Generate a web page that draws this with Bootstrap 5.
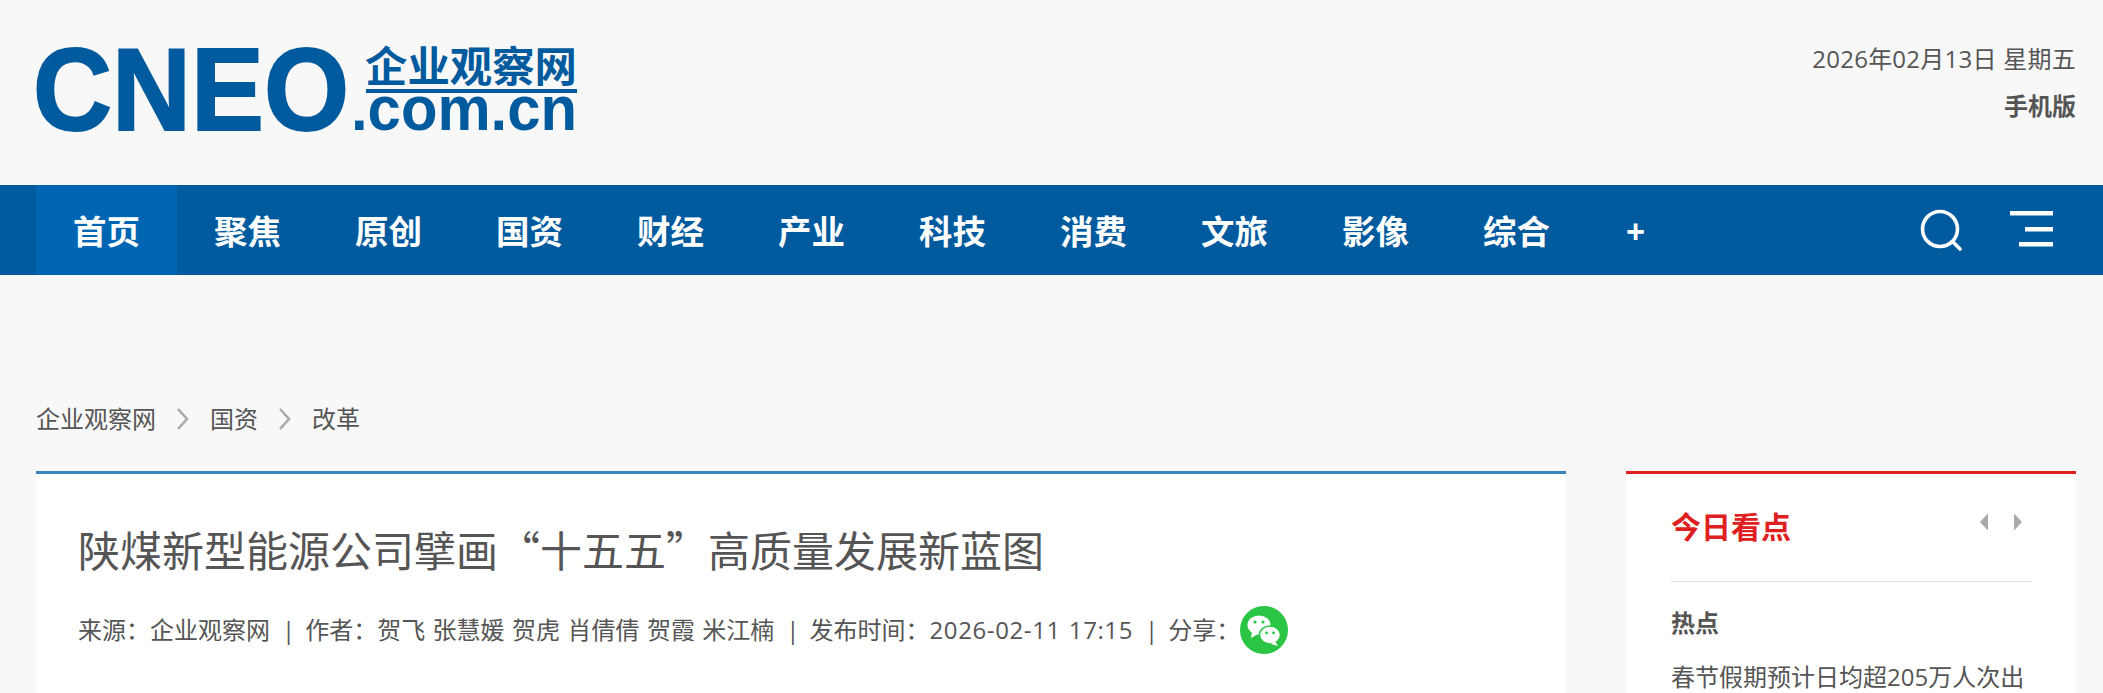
<!DOCTYPE html>
<html lang="zh-CN">
<head>
    <meta charset="UTF-8">
    <meta name="viewport" content="width=device-width, initial-scale=1.0">
    <title>陕煤新型能源公司擘画“十五五”高质量发展新蓝图</title>
    <link href="https://cdn.jsdelivr.net/npm/bootstrap@5.3.0/dist/css/bootstrap.min.css" rel="stylesheet">
    <style>
        html, body {
            height: 693px;
            overflow: hidden;
        }
        body {
            background: #f8f8f8;
            color: #555;
            font-family: "Open Sans", "Noto Sans CJK SC", sans-serif;
            font-size: 24px;
        }
        .page-wrap {
            padding-left: 36px;
            padding-right: 27px;
        }
        .site-top {
            height: 185px;
            padding-top: 47px;
        }
        .site-logo {
            display: block;
            width: 541px;
            height: 84px;
            fill: #005a9e;
            overflow: visible;
        }
        .logo-big {
            font-family: "Liberation Sans", sans-serif;
            font-weight: 700;
            font-size: 116px;
            stroke: #005a9e;
            stroke-width: 2px;
        }
        .logo-cn {
            font-family: "Noto Sans CJK SC", sans-serif;
            font-weight: 700;
            font-size: 42px;
        }
        .logo-dom {
            font-family: "Liberation Sans", sans-serif;
            font-weight: 700;
            font-size: 63px;
        }
        .top-info {
            line-height: 47px;
            margin-top: -12px;
        }
        .date-text {
            letter-spacing: .25px;
        }
        .num-text {
            letter-spacing: .6px;
        }
        .main-bar {
            background: #005a9e;
            height: 90px;
        }
        .main-bar .nav-link {
            width: 141px;
            height: 90px;
            padding: 0;
            color: #fff;
            font-size: 33.5px;
            font-weight: 700;
            line-height: 92px;
            text-align: center;
        }
        .main-bar .nav-link.active {
            background: #0066b3;
        }
        .main-bar .more-link {
            width: 97px;
        }
        .bar-search {
            margin-right: 47px;
        }
        .bar-menu {
            margin-right: 23px;
        }
        .crumbs {
            height: 196px;
            padding-top: 126px;
            line-height: 36px;
        }
        .crumbs a {
            color: #555;
            text-decoration: none;
        }
        .crumb-sep {
            width: 54px;
        }
        .article-box {
            background: #fff;
            border-top: 3px solid #3a83c0;
            height: 222px;
            overflow: hidden;
            padding: 30px 42px 0;
        }
        .article-title {
            font-family: "Noto Sans CJK SC", sans-serif;
            font-size: 42px;
            font-weight: 400;
            line-height: 90px;
            margin: 0;
            color: #555;
        }
        .article-meta {
            line-height: 48px;
            margin-top: 12px;
            word-spacing: 1.2px;
        }
        .meta-sep {
            margin: 0 10px 0 12px;
        }
        .side-box {
            background: #fff;
            border-top: 3px solid #e02020;
            width: 450px;
            margin-left: 60px;
            height: 222px;
            overflow: hidden;
            padding: 0 45px;
        }
        .side-head {
            height: 108px;
            border-bottom: 1px solid #ddd;
            padding-top: 35px;
        }
        .side-head h2 {
            color: #e02020;
            font-size: 30px;
            font-weight: 700;
            margin: 0;
        }
        .side-arrows {
            margin-top: 1px;
            margin-right: 6px;
        }
        .side-label {
            font-weight: 700;
            margin-top: 23px;
            line-height: 36px;
        }
        .side-item {
            margin-top: 18px;
            line-height: 36px;
            white-space: nowrap;
        }
    </style>
</head>
<body>
    <header class="page-wrap site-top d-flex justify-content-between">
        <svg class="site-logo" viewBox="0 0 541 84" role="img" aria-label="CNEO 企业观察网 .com.cn">
            <text class="logo-big" x="-3" y="83" textLength="316" lengthAdjust="spacingAndGlyphs">CNEO</text>
            <text class="logo-cn" x="329" y="35" textLength="212" lengthAdjust="spacingAndGlyphs">企业观察网</text>
            <rect x="330" y="42" width="211" height="4"></rect>
            <text class="logo-dom" x="315" y="83" textLength="226" lengthAdjust="spacingAndGlyphs">.com.cn</text>
        </svg>
        <div class="top-info text-end">
            <div class="date-text">2026年02月13日 星期五</div>
            <div class="fw-bold">手机版</div>
        </div>
    </header>

    <nav class="main-bar">
        <div class="page-wrap d-flex justify-content-between align-items-center">
            <ul class="nav flex-nowrap">
                <li class="nav-item"><a class="nav-link active" href="#">首页</a></li>
                <li class="nav-item"><a class="nav-link" href="#">聚焦</a></li>
                <li class="nav-item"><a class="nav-link" href="#">原创</a></li>
                <li class="nav-item"><a class="nav-link" href="#">国资</a></li>
                <li class="nav-item"><a class="nav-link" href="#">财经</a></li>
                <li class="nav-item"><a class="nav-link" href="#">产业</a></li>
                <li class="nav-item"><a class="nav-link" href="#">科技</a></li>
                <li class="nav-item"><a class="nav-link" href="#">消费</a></li>
                <li class="nav-item"><a class="nav-link" href="#">文旅</a></li>
                <li class="nav-item"><a class="nav-link" href="#">影像</a></li>
                <li class="nav-item"><a class="nav-link" href="#">综合</a></li>
                <li class="nav-item"><a class="nav-link more-link" href="#">+</a></li>
            </ul>
            <div class="d-flex align-items-center">
                <svg class="bar-search" width="43" height="43" viewBox="0 0 43 43" fill="none" stroke="#fff" stroke-width="3.6" stroke-linecap="round">
                    <circle cx="20" cy="20" r="17.5"></circle>
                    <path d="M33 33l7 7"></path>
                </svg>
                <svg class="bar-menu" width="43" height="40" viewBox="0 0 43 40" fill="#fff">
                    <rect x="0" y="1" width="43" height="4.5"></rect>
                    <rect x="15" y="17" width="28" height="4.5"></rect>
                    <rect x="9" y="32" width="34" height="4.5"></rect>
                </svg>
            </div>
        </div>
    </nav>

    <div class="page-wrap">
        <div class="crumbs d-flex align-items-start">
            <a href="#">企业观察网</a>
            <span class="crumb-sep d-flex justify-content-center align-items-center">
                <svg width="16" height="36" viewBox="0 0 16 36" fill="none" stroke="#aaa" stroke-width="2.6"><path d="M3 8l9 10-9 10"></path></svg>
            </span>
            <a href="#">国资</a>
            <span class="crumb-sep d-flex justify-content-center align-items-center">
                <svg width="16" height="36" viewBox="0 0 16 36" fill="none" stroke="#aaa" stroke-width="2.6"><path d="M3 8l9 10-9 10"></path></svg>
            </span>
            <a href="#">改革</a>
        </div>

        <div class="d-flex">
            <main class="article-box flex-grow-1">
                <h1 class="article-title">陕煤新型能源公司擘画“十五五”高质量发展新蓝图</h1>
                <div class="article-meta d-flex align-items-center text-nowrap">
                    <span>来源：企业观察网</span><span class="meta-sep">|</span>
                    <span>作者：贺飞 张慧媛 贺虎 肖倩倩 贺霞 米江楠</span><span class="meta-sep">|</span>
                    <span>发布时间：<span class="num-text">2026-02-11 17:15</span></span><span class="meta-sep">|</span>
                    <span>分享：</span>
                    <svg width="48" height="48" viewBox="0 0 48 48">
                        <circle cx="24" cy="24" r="24" fill="#2ac545"></circle>
                        <ellipse cx="19" cy="19" rx="11.5" ry="9.5" fill="#fff"></ellipse>
                        <path d="M12 25l-1 7 7-4z" fill="#fff"></path>
                        <ellipse cx="30" cy="29" rx="10.5" ry="9" fill="#fff" stroke="#2ac545" stroke-width="1.5"></ellipse>
                        <path d="M35 35l3 5-7-2z" fill="#fff"></path>
                        <circle cx="15" cy="16" r="1.6" fill="#2ac545"></circle>
                        <circle cx="23" cy="16" r="1.6" fill="#2ac545"></circle>
                        <circle cx="26.5" cy="27" r="1.4" fill="#2ac545"></circle>
                        <circle cx="33.5" cy="27" r="1.4" fill="#2ac545"></circle>
                    </svg>
                </div>
            </main>

            <aside class="side-box">
                <div class="side-head d-flex justify-content-between align-items-start">
                    <h2>今日看点</h2>
                    <div class="side-arrows d-flex gap-3">
                        <svg width="16" height="24" viewBox="0 0 16 24" fill="#aaa"><path d="M11 3.500v17l-8-8.500z"></path></svg>
                        <svg width="16" height="24" viewBox="0 0 16 24" fill="#aaa"><path d="M5 3.500v17l8-8.500z"></path></svg>
                    </div>
                </div>
                <div class="side-label">热点</div>
                <div class="side-item">春节假期预计日均超205万人次出</div>
            </aside>
        </div>
    </div>
</body>
</html>
